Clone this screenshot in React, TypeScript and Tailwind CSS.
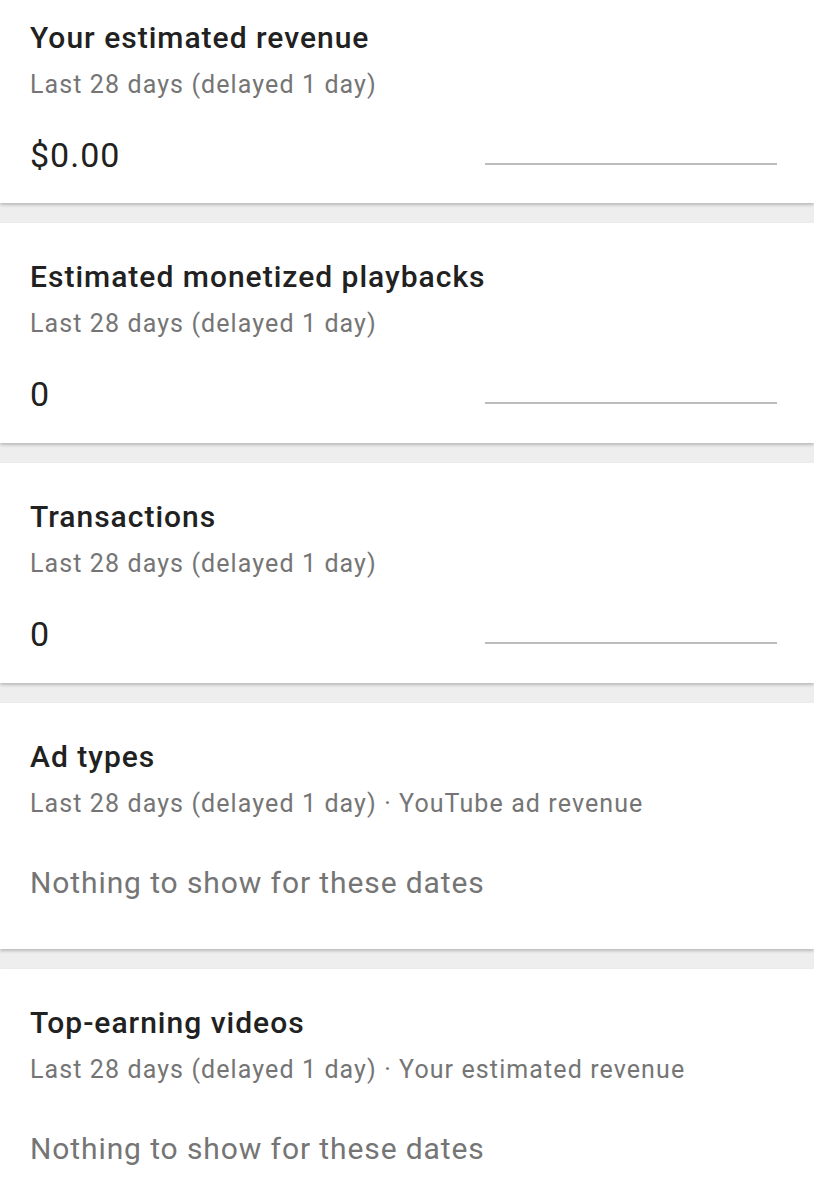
import React from "react";

function MetricCard({ title, value, first }: { title: string; value: string; first?: boolean }) {
  return (
    <div
      className={`relative z-10 bg-white px-[30px] shadow-[0_2px_3px_rgba(0,0,0,0.22)] ${
        first ? "pt-[20px] pb-[28px]" : "pt-[36px] pb-[29px]"
      }`}
    >
      <div className="text-[30px] leading-[36px] font-medium tracking-[1px] text-[#212121]">{title}</div>
      <div className="mt-[13px] text-[25px] leading-[32px] tracking-[1.1px] text-[#757575]">
        Last 28 days (delayed 1 day)
      </div>
      <div className="mt-[34px] flex items-start justify-between">
        <div className="text-[34px] leading-[40px] tracking-[1px] text-[#212121]">{value}</div>
        <div className="mt-[28px] mr-[7px] h-[2px] w-[292px] bg-[#bdbdbd]" />
      </div>
    </div>
  );
}

function EmptyCard({ title, extra }: { title: string; extra: string }) {
  return (
    <div className="relative z-10 bg-white px-[30px] pt-[36px] pb-[48px] shadow-[0_2px_3px_rgba(0,0,0,0.22)]">
      <div className="text-[30px] leading-[36px] font-medium tracking-[1px] text-[#212121]">{title}</div>
      <div className="mt-[13px] text-[25px] leading-[32px] tracking-[1.1px] text-[#757575]">
        Last 28 days (delayed 1 day) · {extra}
      </div>
      <div className="mt-[45px] text-[30px] leading-[36px] tracking-[0.9px] text-[#757575]">
        Nothing to show for these dates
      </div>
    </div>
  );
}

export default function App() {
  return (
    <div
      className="min-h-[1200px] w-[814px] overflow-hidden bg-[#eeeeee] flex flex-col gap-[20px]"
      style={{ fontFamily: "Roboto, 'Noto Sans', sans-serif" }}
    >
      <MetricCard title="Your estimated revenue" value="$0.00" first />
      <MetricCard title="Estimated monetized playbacks" value="0" />
      <MetricCard title="Transactions" value="0" />
      <EmptyCard title="Ad types" extra="YouTube ad revenue" />
      <EmptyCard title="Top-earning videos" extra="Your estimated revenue" />
    </div>
  );
}
